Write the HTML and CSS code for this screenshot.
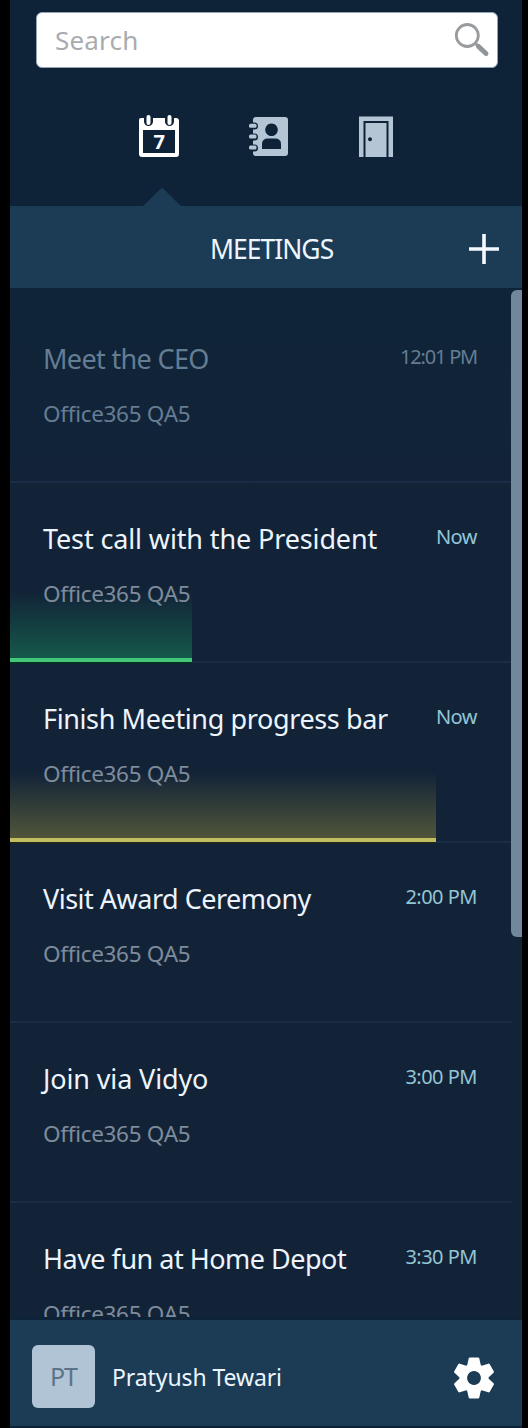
FILE: index.html
```
<!DOCTYPE html>
<html lang="en">
<head>
<meta charset="utf-8">
<title>Meetings</title>
<link rel="stylesheet" href="styles.css">
</head>
<body>
<main class="app">
  <header class="top">
    <div class="search">
      <span class="search-text">Search</span>
      <svg class="search-icon" width="36" height="36" viewBox="0 0 36 36"><circle cx="13.300" cy="13.500" r="11" fill="none" stroke="#999c9e" stroke-width="2.800"/><path d="M21.500 21.500l3 3" stroke="#999c9e" stroke-width="3"/><path d="M24.500 24.500L32 31.500" stroke="#929597" stroke-width="5" stroke-linecap="round"/></svg>
    </div>
    <nav class="tabs">
      <svg width="42" height="44" viewBox="0 0 42 44"><path fill="#fff" fill-rule="evenodd" d="M3 4h3v3.500a4.500 4.500 0 0 0 9 0V4h12v3.500a4.500 4.500 0 0 0 9 0V4h2q3 0 3 3v33q0 3-3 3H4q-3 0-3-3V6q0-2 2-2zM5 16v23h32V16z"/><rect x="8.500" y="1" width="4" height="10" rx="2" fill="#fff"/><rect x="29.500" y="1" width="4" height="10" rx="2" fill="#fff"/><text class="day" x="21.300" y="34.500" text-anchor="middle">7</text></svg>
      <svg width="42" height="44" viewBox="0 0 42 44"><path fill="#b4c6d6" fill-rule="evenodd" d="M8 3h29q3 0 3 3v33q0 3-3 3H8q-3 0-3-3v-1.500h1.500a3.500 3.500 0 0 0 0-7H5v-4h1.500a3.500 3.500 0 0 0 0-7H5v-4h1.500a3.500 3.500 0 0 0 0-7H5V6q0-3 3-3zM14 35h19v-5q0-5.500-6-5.500h-7q-6 0-6 5.500zM23.500 9.500a6.300 6.300 0 1 0 .01 0z"/><g fill="#b4c6d6"><rect x="1" y="9.700" width="7.500" height="4" rx="1.500"/><rect x="1" y="20.500" width="7.500" height="4" rx="1.500"/><rect x="1" y="31.500" width="7.500" height="4" rx="1.500"/></g></svg>
      <svg width="36" height="44" viewBox="0 0 36 44"><path fill="#b4c6d6" d="M1 2.500h34V43h-4.500V7h-25v36H1z"/><path fill="#b4c6d6" fill-rule="evenodd" d="M7.500 9h21v34h-21zM12 23.300a2 2 0 1 0 .01 0z"/></svg>
    </nav>
    <svg class="pointer" width="40" height="20" viewBox="0 0 40 20"><path d="M0 20L19 1.500Q20 .5 21 1.500L40 20z" fill="#1b3c54"/></svg>
  </header>
  <section class="heading">
    <h1>MEETINGS</h1>
    <svg class="plus" width="30" height="30" viewBox="0 0 30 30"><path d="M15 0v30M0 15h30" stroke="#f4f9ff" stroke-width="3.600"/></svg>
  </section>
  <section class="list">
    <article class="row past"><div class="line"><h2 class="tight">Meet the CEO</h2><time>12:01 PM</time></div><p>Office365 QA5</p></article>
    <article class="row"><div class="progress green"></div><div class="line"><h2 class="wide">Test call with the President</h2><time>Now</time></div><p>Office365 QA5</p></article>
    <article class="row"><div class="progress yellow"></div><div class="line"><h2>Finish Meeting progress bar</h2><time>Now</time></div><p>Office365 QA5</p></article>
    <article class="row"><div class="line"><h2 class="snug">Visit Award Ceremony</h2><time>2:00 PM</time></div><p>Office365 QA5</p></article>
    <article class="row"><div class="line"><h2 class="wide">Join via Vidyo</h2><time>3:00 PM</time></div><p>Office365 QA5</p></article>
    <article class="row"><div class="line"><h2 class="snug">Have fun at Home Depot</h2><time>3:30 PM</time></div><p>Office365 QA5</p></article>
    <div class="scroll"></div>
  </section>
  <footer class="user">
    <div class="avatar"><span>PT</span></div>
    <span class="name">Pratyush Tewari</span>
    <svg class="gear" width="42" height="42" viewBox="-21 -21 42 42"><defs><path id="tooth" d="M-7-12L-5.300-19.500Q-5-20.500-4-20.500H4Q5-20.500 5.300-19.500L7-12z"/></defs><g fill="#fff"><path fill-rule="evenodd" d="M0-14.500a14.500 14.500 0 1 0 .01 0zM0-6.900a6.900 6.900 0 1 0 .01 0z"/><use href="#tooth"/><use href="#tooth" transform="rotate(60)"/><use href="#tooth" transform="rotate(120)"/><use href="#tooth" transform="rotate(180)"/><use href="#tooth" transform="rotate(240)"/><use href="#tooth" transform="rotate(300)"/></g></svg>
  </footer>
</main>
</body>
</html>
```
FILE: styles.css
```
* { box-sizing: border-box; }
body { margin: 0; background: #000; font-family: "Noto Sans", sans-serif; }
h1, h2, p { margin: 0; font-weight: 400; }
svg { display: block; flex: none; }
.app { width: 512px; height: 1428px; margin-left: 10px; background: #0f2338; display: flex; flex-direction: column; overflow: hidden; }
.top { height: 206px; padding: 12px 24px 0 26px; position: relative; flex: none; }
.search { height: 56px; background: #fff; border: 1px solid #93a4b5; border-radius: 6px; display: flex; align-items: center; justify-content: space-between; padding: 0 7px 0 18px; }
.search-text { font-size: 26px; color: #a9acaf; letter-spacing: 0.2px; }
.tabs { display: flex; padding: 46px 0 0 102px; gap: 68px; }
.day { font: 700 20px "Noto Sans", sans-serif; fill: #fff; }
.pointer { position: absolute; left: 132px; top: 187px; }
.heading { height: 82px; flex: none; background: #1b3c54; display: flex; align-items: center; justify-content: space-between; padding: 3px 23px 0 200px; }
h1 { font-size: 26.500px; color: #edf5ff; letter-spacing: -1px; }
.list { height: 1029px; flex: none; padding-top: 15px; margin-bottom: 3px; overflow: hidden; position: relative; background: linear-gradient(#0f2438, #122338 20%); }
.row { height: 180px; width: 502px; border-bottom: 2px solid #1b2d45; padding: 36px 35px 0 33px; position: relative; }
.line { display: flex; justify-content: space-between; position: relative; white-space: nowrap; }
h2 { font-size: 27px; line-height: 40px; color: #edf4fc; letter-spacing: -0.38px; }
.wide { letter-spacing: -0.13px; }
.snug { letter-spacing: -0.5px; }
.tight { letter-spacing: -0.65px; }
time { font-size: 20px; line-height: 36px; color: #92c5d6; letter-spacing: -0.5px; }
.row p { position: relative; font-size: 22.500px; line-height: 34px; margin-top: 18px; color: #7e8b9b; letter-spacing: -0.3px; }
.past h2, .past p, .past time { color: #657d93; }
.past time { letter-spacing: -1.2px; }
.progress { position: absolute; left: 0; bottom: -1px; height: 70px; }
.green { width: 182px; border-bottom: 4px solid #43c67a; background: linear-gradient(#12233800, #15594a); box-shadow: 0 2px 0 #063024; }
.yellow { width: 426px; border-bottom: 4px solid #c1bd60; background: linear-gradient(#12233800, #505539); box-shadow: 0 2px 0 #1d271e; }
.scroll { position: absolute; top: 2px; right: 0; width: 11px; height: 647px; background: #71879b; border-radius: 6px 0 0 6px; }
.user { height: 106px; flex: none; background: #1b3c54; display: flex; align-items: center; padding: 6px 27px 0 22px; }
.avatar { width: 63px; height: 63px; border-radius: 6px; background: #b0c4d5; color: #5b7389; font-size: 25px; display: flex; align-items: center; justify-content: center; letter-spacing: -1px; }
.name { font-size: 23px; color: #edf5ff; margin: 2px auto 0 17px; letter-spacing: -0.1px; }
.gear { margin-top: 3px; }
```
